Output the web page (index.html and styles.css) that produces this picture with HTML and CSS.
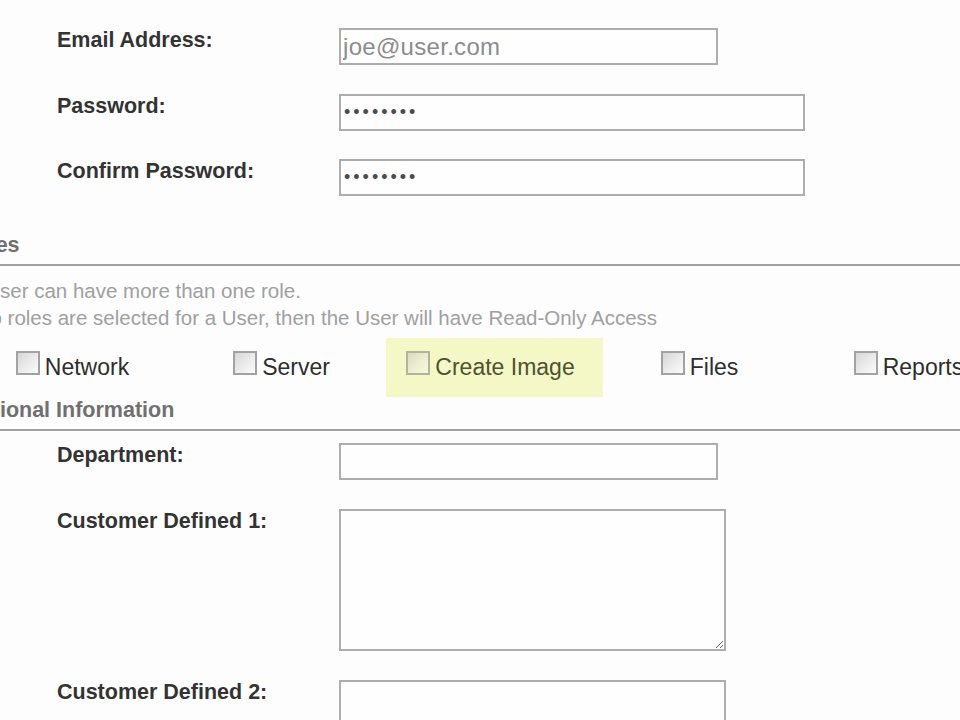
FILE: index.html
```html
<!DOCTYPE html>
<html lang="en">
<head>
<meta charset="utf-8">
<title>User Details</title>
<link rel="stylesheet" href="styles.css">
</head>
<body>
<div class="page">
  <div class="fields fields-top">
    <label class="lbl">Email Address:</label>
    <input class="inp w-short email" type="text" value="joe@user.com">
    <label class="lbl">Password:</label>
    <input class="inp w-long pw" type="password" value="password">
    <label class="lbl">Confirm Password:</label>
    <input class="inp w-long pw" type="password" value="password">
  </div>

  <h2 class="sect sect-roles"><span class="sect-text">Roles</span></h2>
  <div class="note">
    <p class="note-line">A User can have more than one role.</p>
    <p class="note-line note-line-2">If no roles are selected for a User, then the User will have Read-Only Access</p>
  </div>

  <div class="roles">
    <div class="cell"><label class="role"><span class="cb"></span>Network</label></div>
    <div class="cell"><label class="role"><span class="cb"></span>Server</label></div>
    <div class="cell"><label class="role role-hl"><span class="cb"></span>Create Image</label></div>
    <div class="cell"><label class="role"><span class="cb"></span>Files</label></div>
    <div class="cell"><label class="role"><span class="cb"></span>Reports</label></div>
  </div>

  <h2 class="sect sect-add"><span class="sect-text">Additional Information</span></h2>

  <div class="fields fields-bottom">
    <label class="lbl">Department:</label>
    <input class="inp w-short" type="text" value="">
    <label class="lbl">Customer Defined 1:</label>
    <textarea class="inp area"></textarea>
    <label class="lbl">Customer Defined 2:</label>
    <textarea class="inp area"></textarea>
  </div>
</div>
</body>
</html>
```

FILE: styles.css
```css
html, body {
  margin: 0;
  padding: 0;
  overflow: hidden;
  background: #fdfdfd;
}

body {
  font-family: "Liberation Sans", Arial, sans-serif;
  color: #333;
}

.page {
  margin-left: -33px;
}

/* ---------- label / field rows ---------- */
.fields {
  display: grid;
  grid-template-columns: 282px max-content;
  row-gap: 29px;
  padding-left: 90px;
  align-items: start;
}

.fields-top {
  padding-top: 28px;
  row-gap: 28.5px;
}

.fields-bottom {
  padding-top: 12px;
}

.lbl {
  font-weight: bold;
  font-size: 21.5px;
  line-height: 1;
  padding-top: 2px;
  color: #333;
}

.inp {
  box-sizing: border-box;
  height: 37px;
  margin: 0;
  border: 2px solid #adadad;
  border-radius: 0;
  background: #fefefe;
  font-family: "Liberation Sans", Arial, sans-serif;
  font-size: 24px;
  padding: 0 2px;
  outline: none;
}

.w-short { width: 379px; }
.w-long { width: 466px; }

.email {
  color: #8c8c8c;
  letter-spacing: 0.3px;
}

.pw {
  color: #4a4a4a;
  font-size: 18px;
  letter-spacing: 3px;
  padding-left: 3px;
}

.area {
  width: 387px;
  height: 142px;
  resize: both;
}

/* ---------- section headers ---------- */
.sect {
  margin: 0;
  font-size: 21.5px;
  font-weight: bold;
  color: #707070;
  line-height: normal;
  border-bottom: 2px solid #a0a0a0;
}

.sect-text {
  display: inline-block;
}

.sect-roles {
  margin-top: 37px;
  padding-bottom: 6px;
}

.sect-roles .sect-text {
  margin-left: -6px;
}

.sect-add {
  margin-top: 1px;
  padding-bottom: 6px;
}

.sect-add .sect-text {
  margin-left: -22px;
}

/* ---------- notes ---------- */
.note {
  margin: 11px 0 0;
  font-size: 20.5px;
  line-height: 27px;
  color: #a0a0a0;
}

.note-line {
  margin: 0;
  white-space: nowrap;
}

.note-line-2 {
  margin-left: -5px;
}

/* ---------- roles checkboxes ---------- */
.roles {
  display: grid;
  grid-template-columns: repeat(5, 209px);
  margin-left: 5px;
  margin-top: 7px;
}

.cell {
  display: flex;
  justify-content: center;
}

.role {
  display: flex;
  align-items: baseline;
  flex-shrink: 0;
  white-space: nowrap;
  padding: 13px 28px 16px 20px;
  font-size: 23px;
  line-height: normal;
  color: #2e2e2e;
}

.role-hl {
  background: #f4f8c6;
  color: #4f5230;
}

.cb {
  display: inline-block;
  box-sizing: border-box;
  width: 24px;
  height: 24px;
  margin-right: 5px;
  border: 2px solid #a2a2a2;
  background: linear-gradient(135deg, #d6d6d6 0%, #eeeeee 60%, #fafafa 100%);
}

.role-hl .cb {
  border-color: #b2b49a;
  background: linear-gradient(135deg, #d9dcc0 0%, #edf0d2 60%, #f5f8dc 100%);
}
```
